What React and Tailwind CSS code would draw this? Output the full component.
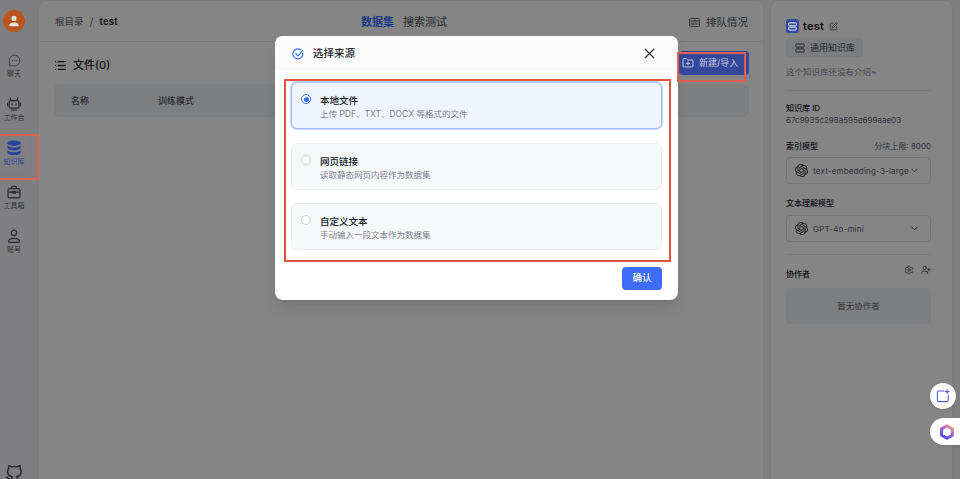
import React from "react";
import { List, X, FolderPlus, ChevronDown, Settings, UserPlus, SquarePen, MessageCircleMore } from "lucide-react";
import { SiOpenai } from "react-icons/si";
import { FiGithub } from "react-icons/fi";

const font = { fontFamily: '"Inter","Noto Sans CJK SC",sans-serif' };

function Person({ size = 13, className = "" }) {
  return (
    <svg viewBox="0 0 14 14" width={size} height={size} fill="none" stroke="currentColor" strokeWidth="1.2" className={className}>
      <circle cx="7" cy="3.8" r="2.7" />
      <path d="M1.6 12.8c0-2.2 2-3.5 5.4-3.5s5.4 1.3 5.4 3.5c0 .4-.3.6-.7.6H2.3c-.4 0-.7-.2-.7-.6Z" />
    </svg>
  );
}

function Robot({ size = 14 }) {
  return (
    <svg viewBox="0 0 14 14" width={size} height={size} fill="none" stroke="currentColor" strokeWidth="1.2" strokeLinecap="round">
      <rect x="2" y="3.6" width="10" height="7.6" rx="2" />
      <path d="M4.2 3.4 3 1M9.8 3.4 11 1M.4 6.2v2.6M13.6 6.2v2.6M4.5 13h5" />
      <path d="M5 6.8v1M9 6.8v1" />
    </svg>
  );
}

function Toolbox({ size = 14 }) {
  return (
    <svg viewBox="0 0 14 14" width={size} height={size} fill="none" stroke="currentColor" strokeWidth="1.2" strokeLinejoin="round">
      <rect x="1" y="3.6" width="12" height="9.2" rx="1.6" />
      <path d="M4.6 3.6V2.2c0-.5.3-.9.9-.9h3c.6 0 .9.4.9.9v1.4M1 7.2h12" />
      <rect x="5.8" y="6.4" width="2.4" height="1.8" fill="currentColor" />
    </svg>
  );
}

function Stack({ size = 16 }) {
  return (
    <svg viewBox="0 0 16 16" width={size} height={size} fill="currentColor">
      <ellipse cx="8" cy="3.2" rx="6.6" ry="2.7" />
      <path d="M1.4 5.2c1.2 1.6 3.8 2.3 6.6 2.3s5.4-.7 6.6-2.3v2.4c0 1.5-3 2.7-6.6 2.7s-6.6-1.2-6.6-2.7Z" />
      <path d="M1.4 10c1.2 1.6 3.8 2.3 6.6 2.3s5.4-.7 6.6-2.3v2.4c0 1.5-3 2.7-6.6 2.7s-6.6-1.2-6.6-2.7Z" />
    </svg>
  );
}

function Bars({ size = 10, className = "" }) {
  return (
    <svg viewBox="0 0 10 10" width={size} height={size} fill="none" stroke="currentColor" strokeWidth="1" className={className}>
      <rect x="0.8" y="1" width="8.4" height="3.2" rx="0.6" />
      <rect x="0.8" y="5.8" width="8.4" height="3.2" rx="0.6" />
    </svg>
  );
}

function NavItem({ icon, label, active }) {
  return (
    <div className={`-ml-[2px] flex h-[37px] w-[32px] shrink-0 flex-col items-center justify-center rounded-r-md ${active ? "bg-[#f6f6fa]" : ""}`}>
      <span className={`flex h-[16px] items-center ${active ? "relative z-10 text-[#24409f]" : "text-[#4a5059]"}`}>{icon}</span>
      <span className={`mt-[1px] whitespace-nowrap text-[7px] leading-[10px] ${active ? "relative z-10 text-[#2a459f]" : "text-[#5d6470]"}`}>{label}</span>
    </div>
  );
}

function Option({ title, desc, active }) {
  return (
    <div className={`flex h-[47px] gap-[9px] rounded-md border px-[9px] pt-[11px] ${active ? "border-[#a3bcff] bg-[#f0f4ff] shadow-[0_0_0_1px_#c5d7ff]" : "border-[#eceef3] bg-[#f7f8fa]"}`}>
      <span className={`flex h-[10px] w-[10px] shrink-0 items-center justify-center rounded-full border ${active ? "border-[#3370ff] bg-white" : "border-[#c7cbd3] bg-white"}`}>
        {active && <span className="h-[5px] w-[5px] rounded-full bg-[#3370ff]" />}
      </span>
      <div>
        <div className="mt-[1px] text-[9.5px] font-medium leading-[12px] text-[#111824]">{title}</div>
        <div className="mt-[1px] text-[8.5px] leading-[13px] text-[#7d838f]">{desc}</div>
      </div>
    </div>
  );
}

function ModelSelect({ name, className }) {
  return (
    <div className={`flex h-[27px] items-center rounded border border-[#dfe2e8] pl-[8px] pr-[10px] ${className}`}>
      <SiOpenai size={13} className="text-[#24282f]" />
      <span className="ml-[5px] flex-1 whitespace-nowrap text-[8px] tracking-[0.2px] text-[#5c626e]">{name}</span>
      <ChevronDown size={11} className="text-[#4a5059]" />
    </div>
  );
}

export default function App() {
  return (
    <div className="relative flex h-screen w-full overflow-hidden bg-[#f4f4f7]" style={font}>
      <aside className="flex w-[38px] shrink-0 flex-col items-start">
        <div className="relative z-10 ml-[3px] mt-[10px] flex h-[22px] w-[22px] items-center justify-center rounded-full bg-[#b8551f]">
          <svg viewBox="0 0 14 14" width="12" height="12" fill="#e9e3de">
            <circle cx="7" cy="4" r="3" />
            <path d="M1.5 12.4c0-2.4 2.4-3.7 5.5-3.7s5.5 1.3 5.5 3.7c0 .4-.3.6-.7.6H2.2c-.4 0-.7-.2-.7-.6Z" />
          </svg>
        </div>
        <div className="mt-[15px] flex flex-col gap-[7px]">
          <NavItem icon={<MessageCircleMore size={13} strokeWidth={1.3} />} label="聊天" />
          <NavItem icon={<Robot />} label="工作台" />
          <NavItem icon={<Stack />} label="知识库" active />
          <NavItem icon={<Toolbox />} label="工具箱" />
          <NavItem icon={<Person size={14} />} label="账号" />
        </div>
        <FiGithub size={18} className="ml-[5px] mt-auto -mb-[4px] text-[#4a5059]" />
      </aside>

      <main className="flex min-w-0 flex-1 flex-col rounded-t-lg border border-b-0 border-[#eceef2] bg-white">
        <header className="relative flex h-[41px] shrink-0 items-center border-b border-[#e8ebf0] pl-[16px] pr-[15px] pt-[3px]">
          <span className="text-[9.5px] text-[#5d6470]">根目录</span>
          <span className="mx-[6px] text-[11px] text-[#5d6470]">/</span>
          <span className="text-[9.5px] font-semibold tracking-[0.2px] text-[#24282f]">test</span>
          <div className="absolute left-[322px] flex gap-[9px] text-[11px]">
            <span className="font-semibold text-[#3370ff]">数据集</span>
            <span className="text-[#4a5059]">搜索测试</span>
          </div>
          <div className="ml-auto flex items-center gap-[6px] text-[10.5px] text-[#4a5059]">
            <svg viewBox="0 0 12 10" width="11" height="9" fill="none" stroke="currentColor" strokeWidth="0.9">
              <rect x="0.5" y="0.5" width="11" height="9" rx="1" />
              <path d="M0.5 3.4h5M8 3.4h3.5M0.5 6.6h2.5M6 6.6h5.5" />
              <circle cx="6.8" cy="3.4" r="1.1" />
              <circle cx="4.4" cy="6.6" r="1.1" />
            </svg>
            <span>排队情况</span>
          </div>
        </header>
        <div className="pl-[15px] pr-[14px]">
          <div className="flex h-[42px] items-center gap-[6px]">
            <List size={13} strokeWidth={2.4} className="mt-[4px] text-[#24282f]" />
            <span className="mt-[4px] text-[11px] font-medium text-[#24282f]">文件(0)</span>
            <div className="relative z-10 ml-auto flex h-[24px] w-[70px] items-center gap-[5px] rounded bg-[#34479b] pl-[3px] text-[9px] text-[#c7cce0]">
              <FolderPlus size={12} />
              <span className="whitespace-nowrap">新建/导入</span>
            </div>
          </div>
          <div className="flex h-[33px] items-center rounded-md bg-[#f0f1f6] pl-[17px] text-[9px] font-medium text-[#4a5059]">
            <span className="w-[87px]">名称</span>
            <span>训练模式</span>
          </div>
        </div>
      </main>

      <aside className="ml-[6px] mr-[7px] w-[183px] shrink-0 rounded-t-lg border border-b-0 border-[#eceef2] bg-white pl-[15px] pr-[21px] pt-[18px]">
        <div className="flex h-[14px] items-center">
          <span className="relative z-10 flex h-[14px] w-[13px] items-center justify-center rounded-[3px] bg-[#34479b]">
            <Bars size={9} className="text-white" />
          </span>
          <span className="ml-[4px] text-[11px] font-semibold tracking-[0.2px] text-[#111824]">test</span>
          <SquarePen size={9} className="ml-[5px] text-[#4a5059]" />
        </div>
        <div className="mt-[5px] flex h-[19px] w-[77px] items-center gap-[5px] rounded bg-[#f0f1f6] pl-[9px] text-[9px] text-[#4a5059]">
          <Bars size={10} />
          <span className="whitespace-nowrap">通用知识库</span>
        </div>
        <p className="mt-[9px] text-[8.5px] leading-[12px] text-[#7d838f]">这个知识库还没有介绍~</p>
        <div className="mt-[12px] h-px bg-[#e8ebf0]" />
        <div className="mt-[11px] text-[8px] font-medium leading-[12px] text-[#24282f]">知识库 ID</div>
        <div className="text-[8px] leading-[12px] text-[#5d6470]">67c9935c298a595e699aae03</div>
        <div className="mt-[14px] flex items-center justify-between text-[8px] leading-[12px]">
          <span className="font-medium text-[#24282f]">索引模型</span>
          <span className="text-[#5d6470]">分块上限: 8000</span>
        </div>
        <ModelSelect name="text-embedding-3-large" className="mt-[5px]" />
        <div className="mt-[13px] text-[8px] font-medium leading-[12px] text-[#24282f]">文本理解模型</div>
        <ModelSelect name="GPT-4o-mini" className="mt-[6px]" />
        <div className="mt-[12px] h-px bg-[#e8ebf0]" />
        <div className="mt-[10px] flex h-[15px] items-start justify-between">
          <span className="mt-[3px] text-[8px] font-medium leading-[12px] text-[#24282f]">协作者</span>
          <div className="flex gap-[7px] text-[#4a5059]">
            <Settings size={10} />
            <UserPlus size={10} />
          </div>
        </div>
        <div className="mt-[8px] flex h-[36px] items-center justify-center rounded bg-[#f0f1f6] text-[8.5px] text-[#5d6470]">暂无协作者</div>
      </aside>

      <div className="absolute inset-0 flex justify-center bg-black/48 pr-[7px] pt-[36px]">
        <div className="h-[264px] w-[403px] overflow-hidden rounded-lg bg-white shadow-lg">
          <div className="flex h-[35px] items-center bg-[#fbfbfc] pl-[17px] pr-[21px]">
            <svg viewBox="0 0 12 12" width="12" height="12" fill="none" stroke="#3370ff" strokeWidth="1.2" strokeLinecap="round" strokeLinejoin="round">
              <path d="M10.8 5.2A5 5 0 1 1 8.6 1.7" />
              <path d="M3.8 5.6 6 7.8 10.8 2.6" />
            </svg>
            <span className="ml-[9px] text-[10.5px] font-medium text-[#24282f]">选择来源</span>
            <X size={17} strokeWidth={1.5} className="ml-auto -mr-[1px] text-[#24282f]" />
          </div>
          <div className="flex flex-col gap-[13.5px] px-[16px] pt-[11px]">
            <Option active title="本地文件" desc="上传 PDF、TXT、DOCX 等格式的文件" />
            <Option title="网页链接" desc="读取静态网页内容作为数据集" />
            <Option title="自定义文本" desc="手动输入一段文本作为数据集" />
          </div>
          <div className="mr-[16px] mt-[17px] flex justify-end">
            <button className="h-[23px] w-[40px] rounded bg-[#3e6cf6] text-[9.5px] font-medium text-white">确认</button>
          </div>
        </div>
      </div>

      <div className="absolute left-0 top-[134px] z-20 h-[46px] w-[39px] border-2 border-l-0 border-[#e0604d]" />
      <div className="absolute left-[284px] top-[79px] z-20 h-[183px] w-[387px] border-2 border-[#dd5540]" />
      <div className="absolute left-[677px] top-[52px] z-20 h-[30px] w-[69px] border-2 border-[#e0604d]" />

      <div className="absolute left-[930px] top-[383px] flex h-[26px] w-[26px] items-center justify-center rounded-full bg-white shadow">
        <svg viewBox="0 0 14 14" width="14" height="14" fill="none" stroke="#4f5fe0" strokeWidth="1.1" strokeLinecap="round">
          <path d="M8 2H2.8C2 2 1.4 2.6 1.4 3.4v7.8c0 .8.6 1.4 1.4 1.4h8c.8 0 1.4-.6 1.4-1.4V6.4" />
          <path d="M11.2 0.8v3.6M9.4 2.6H13" />
        </svg>
      </div>
      <div className="absolute left-[930px] top-[418px] flex h-[27px] w-[40px] items-center rounded-l-full bg-white pl-[8px] shadow">
        <svg viewBox="0 0 20 20" width="18" height="18">
          <defs>
            <linearGradient id="hexg" x1="0.8" y1="0" x2="0.2" y2="1">
              <stop offset="0" stopColor="#f0a080" />
              <stop offset="0.4" stopColor="#b060d8" />
              <stop offset="1" stopColor="#3d4fe8" />
            </linearGradient>
          </defs>
          <path d="M10 3 16 6.500v7L10 17 4 13.500V6.500Z" fill="none" stroke="url(#hexg)" strokeWidth="3.4" strokeLinejoin="round" />
        </svg>
      </div>
    </div>
  );
}
